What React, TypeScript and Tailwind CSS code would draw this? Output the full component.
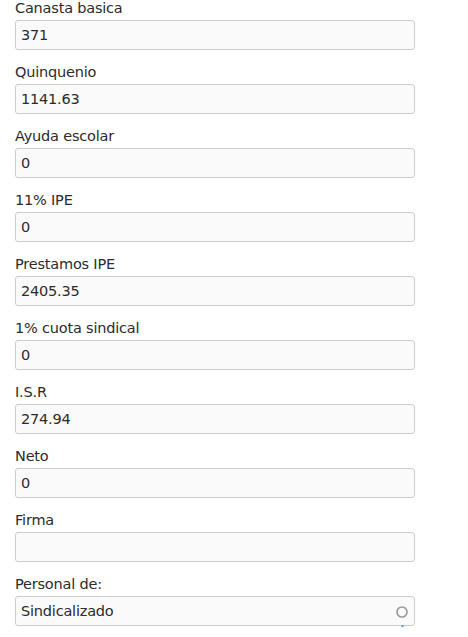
import React from 'react';

const fields = [
  { label: 'Canasta basica', value: '371' },
  { label: 'Quinquenio', value: '1141.63' },
  { label: 'Ayuda escolar', value: '0' },
  { label: '11% IPE', value: '0' },
  { label: 'Prestamos IPE', value: '2405.35' },
  { label: '1% cuota sindical', value: '0' },
  { label: 'I.S.R', value: '274.94' },
  { label: 'Neto', value: '0' },
  { label: 'Firma', value: '' },
];

const Field = ({ label, value }: { label: string; value: string }) => (
  <div className="mb-[14px]">
    <div className="leading-4 mb-1 text-[#2b2b2b]">{label}</div>
    <div className="h-[30px] w-[400px] rounded-[3px] border border-[#cccccc] bg-[#fafafa] px-[5px] pt-[1px] flex items-center text-[#2b2b2b]">
      {value}
    </div>
  </div>
);

export default function App() {
  return (
    <div className="w-[468px] h-[637px] overflow-hidden bg-white pl-[15px] text-[14.5px] tracking-[-0.2px] font-['DejaVu_Sans',sans-serif]">
      {fields.map((f) => (
        <Field key={f.label} label={f.label} value={f.value} />
      ))}
      <div>
        <div className="leading-4 mb-1 text-[#2b2b2b]">Personal de:</div>
        <div className="relative h-[30px] w-[400px] rounded-[3px] border border-[#cccccc] bg-[#fafafa] px-[5px] pt-[1px] flex items-center justify-between text-[#2b2b2b]">
          <span>Sindicalizado</span>
          <svg width="14" height="14" viewBox="0 0 14 14">
            <circle cx="7" cy="7" r="5" fill="none" stroke="#9a9a9a" strokeWidth="1.7" />
          </svg>
          <span className="absolute right-[10px] bottom-[-2px] w-[3px] h-[2px] rounded-full bg-[#6fa8dc]" />
        </div>
      </div>
    </div>
  );
}
